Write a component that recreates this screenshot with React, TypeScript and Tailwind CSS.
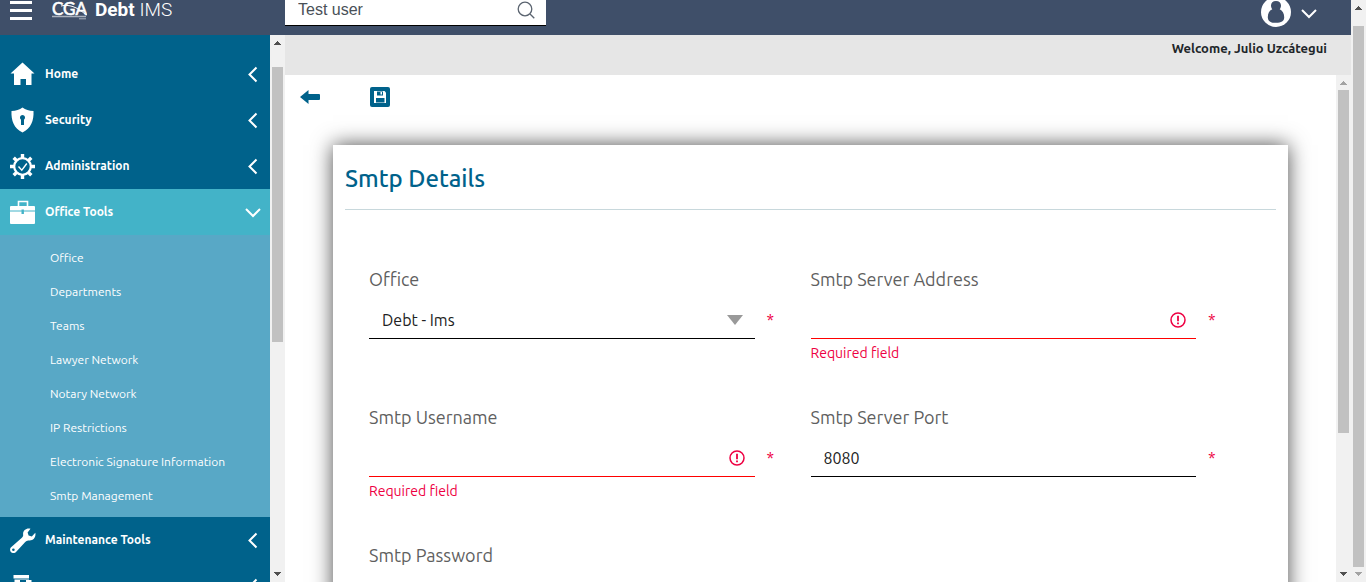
import type { ReactNode } from "react";

function Scrollbar({ inset, thumb, className = "", upDim = false, downDim = false }: { inset: string; thumb: string; className?: string; upDim?: boolean; downDim?: boolean }) {
  return (
    <div aria-hidden="true" className={`flex w-[15px] shrink-0 flex-col items-center justify-between bg-[#f1f1f1] ${className}`}>
      <div className="flex w-full grow flex-col items-center">
        <svg className={`shrink-0 ${inset}`} width="7" height="4" viewBox="0 0 7 4" fill={upDim ? "#a3a3a3" : "#505050"}>
          <path d="M3 0h1v1h1v1h1v1h1v1H0V3h1V2h1V1h1z" />
        </svg>
        <div className={`w-[11px] bg-[#c1c1c1] ${thumb}`} />
      </div>
      <svg className="mb-[6px] shrink-0" width="7" height="4" viewBox="0 0 7 4" fill={downDim ? "#a3a3a3" : "#505050"}>
        <path d="M0 0h7v1H6v1H5v1H4v1H3V3H2V2H1V1H0z" />
      </svg>
    </div>
  );
}

function Chevron({ open = false, size = 18 }: { open?: boolean; size?: number }) {
  return (
    <svg width={size} height={size} viewBox="0 0 18 18" fill="none" stroke="#fff" strokeWidth="2">
      <path d={open ? "M2 6l7 7 7-7" : "M12.500 2.500l-7 7 7 7"} />
    </svg>
  );
}

const HomeIcon = (
  <svg width="26" height="25" viewBox="0 0 26 25" fill="#fff">
    <path d="M12.500 .5L24.500 11.500h-3v11.500h-5.500v-6h-5.500v6H4V11.500H.5z" />
  </svg>
);
const ShieldIcon = (
  <svg width="26" height="26" viewBox="0 0 26 26">
    <path d="M12.500.5c3 2.300 6.500 3.500 11 3.600.5 9.500-2.500 17.500-11 21.400C4 21.600 1 13.600 1.500 4.100c4.500-.1 8-1.300 11-3.600z" fill="#fff" />
    <path d="M12.500 8a2.600 2.600 0 0 1 1.500 4.700V18h-3v-5.300A2.600 2.600 0 0 1 12.500 8z" fill="#00628b" />
  </svg>
);
const GearIcon = (
  <svg width="26" height="26" viewBox="0 0 26 26" fill="none" stroke="#fff">
    <circle cx="12.500" cy="13.500" r="8.300" strokeWidth="2.200" />
    <path d="M12.500 1v4M12.500 22v4M0 13.500h4M21 13.500h4M3.700 4.700l2.700 2.700M18.600 19.600l2.700 2.700M3.700 22.300l2.700-2.700M18.600 7.400l2.700-2.700" strokeWidth="3.400" />
    <path d="M8.500 13.500l3.300 3.700 5-6.700" strokeWidth="1.400" />
  </svg>
);
const BriefcaseIcon = (
  <svg width="26" height="26" viewBox="0 0 26 26">
    <path d="M8.500 7V2.500h9V7" fill="none" stroke="#fff" strokeWidth="1.600" />
    <rect x="0" y="7" width="25" height="18" rx="1" fill="#fff" />
    <path d="M0 12h26" fill="none" stroke="#43b3c8" strokeWidth="1" />
    <rect x="11.500" y="10.500" width="2.400" height="4.500" fill="#43b3c8" />
  </svg>
);
const WrenchIcon = (
  <svg width="26" height="26" viewBox="0 0 26 26">
    <path d="M20.500 1.800L17.600 5.500l1 3 3.200.9 3.500-3.700c1 4.600-2.400 8.700-6.900 7.700-1.200-.1-2.100.6-3.400 1.900L6 25C3 28-1.800 24 .8 20.600L11.600 11c1.400-1.300 1.700-2 1.500-3.400C12.800 3.300 16.600.7 20.500 1.800z" fill="#fff" />
    <circle cx="3.400" cy="22.800" r="1.300" fill="#00628b" />
  </svg>
);
const PrinterIcon = (
  <svg width="26" height="22" viewBox="0 0 26 22" fill="#fff">
    <path d="M3.500 0h15.500v3.500H3.500zM4.500 4.500h14.500V5h2.500v11H4.500z" />
    <path d="M10 5h6v3h-6z" fill="#00628b" />
  </svg>
);

function NavItem({ icon, label, open = false }: { icon: ReactNode; label: string; open?: boolean }) {
  return (
    <button type="button" aria-expanded={open} className={`flex h-[46px] w-full shrink-0 items-center pr-2 pl-[10px] text-left text-[12px] font-bold text-white ${open ? "bg-[#43b3c8]" : ""}`}>
      <span className="flex w-[26px] justify-center">{icon}</span>
      <span className="ml-[9px] grow">{label}</span>
      <Chevron open={open} />
    </button>
  );
}

const officeLinks = ["Office", "Departments", "Teams", "Lawyer Network", "Notary Network", "IP Restrictions", "Electronic Signature Information", "Smtp Management"];

function Sidebar() {
  return (
    <nav className="flex w-[270px] shrink-0 flex-col overflow-hidden bg-[#00628b] pt-4">
      <NavItem icon={HomeIcon} label="Home" />
      <NavItem icon={ShieldIcon} label="Security" />
      <NavItem icon={GearIcon} label="Administration" />
      <NavItem icon={BriefcaseIcon} label="Office Tools" open />
      <ul className="shrink-0 bg-[#58a8c6] pt-[6px] pb-1">
        {officeLinks.map((l) => (
          <li key={l}>
            <a href="#" className="flex h-[34px] items-center pl-[50px] text-[12px] text-white">{l}</a>
          </li>
        ))}
      </ul>
      <NavItem icon={WrenchIcon} label="Maintenance Tools" />
      <NavItem icon={PrinterIcon} label="" />
    </nav>
  );
}

function ErrorIcon() {
  return (
    <svg className="mr-[10px] shrink-0" width="16" height="16" viewBox="0 0 16 16" fill="none" stroke="#ee0042" strokeWidth="1.500">
      <circle cx="8" cy="8" r="7" />
      <path d="M8 3.800v5.400M8 10.500v1.700" strokeWidth="1.800" />
    </svg>
  );
}

function Field({ id, label, error, required = true, type = "text", value = "", options }: { id: string; label: string; error?: string; required?: boolean; type?: string; value?: string; options?: string[] }) {
  const control = "h-full w-full min-w-0 appearance-none bg-transparent px-[13px] text-[16px] text-[#212121] outline-none";
  return (
    <div className="h-[138px]">
      <label htmlFor={id} className="block text-[18px] leading-6 text-[#5f5f5f]">{label}</label>
      <div className="mt-[11px] flex">
        <div className={`flex h-[37px] grow items-center border-b ${error ? "border-b-[#ff0000]" : "border-b-black"}`}>
          {options ? (
            <select id={id} className={control}>
              {options.map((o) => <option key={o}>{o}</option>)}
            </select>
          ) : (
            <input id={id} type={type} defaultValue={value} className={control} />
          )}
          {options && (
            <svg className="mr-3 shrink-0" width="16" height="10" viewBox="0 0 16 10" fill="#999"><path d="M0 0h16L8 10z" /></svg>
          )}
          {error && <ErrorIcon />}
        </div>
        <span className="w-8 pl-3 text-[16px] leading-9 text-[#ee0042]">{required ? "*" : ""}</span>
      </div>
      {error && <p className="pt-1 text-[14px] leading-5 text-[#ee0042]">{error}</p>}
    </div>
  );
}

function Header() {
  return (
    <header className="flex h-[35px] shrink-0 items-start bg-[#3f4f69]">
      <div className="flex w-[285px] items-start">
        <button type="button" aria-label="Menu" className="ml-[10px] pt-px">
          <svg width="22" height="20" viewBox="0 0 22 20" fill="#fff"><path d="M0 0h22v3H0zM0 8h22v3H0zM0 16h22v3H0z" /></svg>
        </button>
        <svg className="ml-5" width="35" height="20" viewBox="0 0 35 20" role="img" aria-label="CGA">
          <text x="0" y="15" fill="#fff" stroke="#fff" strokeWidth=".6" fontFamily="Lato, sans-serif" fontSize="17">CGA</text>
          <path d="M9 6c8-2 16 1 24 8" fill="none" stroke="#fff" strokeWidth="1" />
          <path d="M0 16.500h34" stroke="#aab2bf" strokeWidth="1.500" />
          <path d="M27 18.800h7" stroke="#aab2bf" strokeWidth="1" />
        </svg>
        <span className="ml-2 font-['Roboto',sans-serif] text-[19px] leading-5 text-white"><b>Debt</b> <span className="font-light">IMS</span></span>
      </div>
      <div className="flex h-[26px] w-[261px] items-center border-b border-black bg-white pb-[6px]">
        <input aria-label="Search" defaultValue="Test user" className="w-full min-w-0 bg-transparent pl-[13px] font-['Liberation_Sans',Arial,sans-serif] text-[16px] text-[#495057] outline-none" />
        <svg className="mr-[11px] shrink-0" width="18" height="18" viewBox="0 0 18 18" fill="none" stroke="#5b6470" strokeWidth="1.300"><circle cx="8" cy="8" r="6.800" /><path d="M13 13l4.300 4.300" /></svg>
      </div>
      <button type="button" aria-label="Account" className="mr-[33px] ml-auto flex items-start">
        <svg width="30" height="27" viewBox="0 0 30 27">
          <circle cx="15" cy="12" r="15" fill="#fff" />
          <path d="M15 1c3.200 0 5 2 5 4.600 0 1.600-.5 2.700-1.300 3.600 2.800 1.300 4.600 4.300 4.500 8.300-.1 3.800-2.800 5.300-8.200 5.300s-8.100-1.500-8.200-5.300c-.1-4 1.700-7 4.500-8.300-.8-.9-1.300-2-1.300-3.600C10 3 11.800 1 15 1z" fill="#3f4f69" />
        </svg>
        <span className="ml-[9px] pt-1"><Chevron open /></span>
      </button>
    </header>
  );
}

export default function App() {
  return (
    <div className="flex h-screen overflow-hidden bg-white font-['Ubuntu','Noto_Sans',sans-serif]">
      <div className="flex min-w-0 grow flex-col">
        <Header />
        <div className="flex min-h-0 grow">
          <Sidebar />
          <Scrollbar inset="mt-[6px] mb-[22px]" thumb="h-[275px]" />
          <div className="flex min-w-0 grow flex-col">
            <div className="h-10 shrink-0 bg-[#e6e6e6] pt-[3px] pr-6 text-right text-[13px] leading-5 font-bold text-[#212529]">Welcome, Julio Uzcátegui</div>
            <div className="flex min-h-0 grow">
              <main className="min-w-0 grow overflow-hidden">
                <div className="flex h-[70px] gap-[50px] pt-3 pl-[15px]">
                  <button type="button" aria-label="Back" className="h-5">
                    <svg width="20" height="20" viewBox="0 0 20 20" fill="#00628b"><path d="M0 10l8.500-7v4H19q1 0 1 1v4q0 1-1 1H8.500v4z" /></svg>
                  </button>
                  <button type="button" aria-label="Save" className="h-5">
                    <svg width="20" height="20" viewBox="0 0 20 20"><rect width="20" height="20" rx="2" fill="#00628b" /><path d="M4 4h10.500L16 5.500V16H4z" fill="#fff" /><path d="M7 4.500h6V8.500H7zM6 11h8.500v4.500H6z" fill="#00628b" /><path d="M10.500 5h1.500v2.500h-1.500z" fill="#fff" /></svg>
                  </button>
                </div>
                <section className="mx-12 bg-white px-3 pt-[18px] shadow-[0_0_20px_#000000b3]">
                  <h1 className="border-b border-[#c8d8dc] pb-[14px] text-[24px] leading-8 font-medium text-[#00628b]">Smtp Details</h1>
                  <form className="grid grid-cols-2 gap-x-6 pt-[57px] pr-12 pl-6">
                    <Field id="office" label="Office" options={["Debt - Ims"]} />
                    <Field id="address" label="Smtp Server Address" error="Required field" />
                    <Field id="username" label="Smtp Username" error="Required field" />
                    <Field id="port" label="Smtp Server Port" value="8080" />
                    <Field id="password" label="Smtp Password" type="password" />
                  </form>
                </section>
              </main>
              <Scrollbar inset="mt-[6px] mb-[5px]" thumb="h-[343px]" upDim />
            </div>
          </div>
        </div>
      </div>
      <Scrollbar inset="mt-[6px] mb-[16px]" thumb="mb-[5px] grow" downDim />
    </div>
  );
}
